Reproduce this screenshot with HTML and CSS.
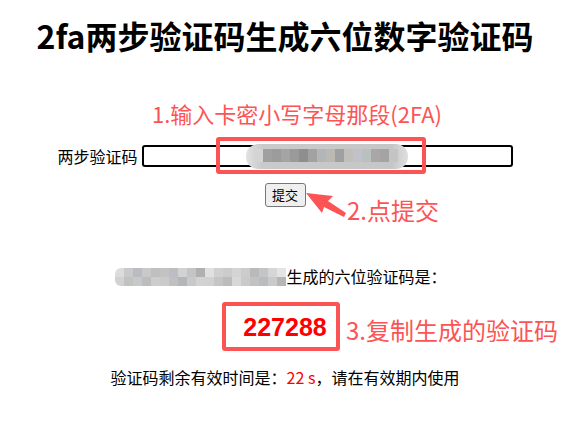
FILE: index.html
```html
<!DOCTYPE html>
<html lang="zh-CN">
<head>
<meta charset="utf-8">
<title>2fa两步验证码生成六位数字验证码</title>
<link rel="stylesheet" href="styles.css">
</head>
<body>
<div class="page">
  <h1 class="title">2fa两步验证码生成六位数字验证码</h1>

  <form class="form-row">
    <label class="label" for="secret">两步验证码</label>
    <span class="input-wrap">
      <input class="input" id="secret" type="text">
      <span class="mosaic mosaic-input">
        <i style="background:#d4d4d4"></i><i style="background:#a0a0a0"></i><i style="background:#9c9c9c"></i><i style="background:#a4a4a4"></i><i style="background:#9a9a9a"></i><i style="background:#8e8e8e"></i><i style="background:#a2a2a2"></i><i style="background:#b3b6b8"></i><i style="background:#bcb9b4"></i><i style="background:#9fa0a2"></i><i style="background:#c0bfb9"></i><i style="background:#c2c0c8"></i><i style="background:#b9c0c0"></i><i style="background:#a9a6a6"></i><i style="background:#a4a4a4"></i><i style="background:#c4c4c4"></i>
      </span>
    </span>
  </form>

  <div class="btn-row"><button class="btn" type="button">提交</button></div>

  <p class="result-line"><span class="mosaic-text"><i style="background:#dcdcdc"></i><i style="background:#cacaca"></i><i style="background:#b9bcc0"></i><i style="background:#c8c9cb"></i><i style="background:#c0bfbd"></i><i style="background:#c3c3c3"></i><i style="background:#bbbec2"></i><i style="background:#d2d2d2"></i><i style="background:#c4c4c4"></i><i style="background:#b0b0b0"></i><i style="background:#e0e0e0"></i><i style="background:#d0d0d0"></i><i style="background:#cbcccc"></i><i style="background:#d4d4d4"></i><i style="background:#cccccc"></i><i style="background:#bababa"></i><i style="background:#c3c6c8"></i><i style="background:#d6d6d6"></i><i style="background:#e4e4e4"></i><i style="background:#d2d2d2"></i><i style="background:#c2c2c2"></i><i style="background:#c6c8ca"></i><i style="background:#bdbdbd"></i><i style="background:#cdcdcd"></i><i style="background:#cbcbcb"></i><i style="background:#c0c0c0"></i><i style="background:#b4b7ba"></i><i style="background:#c9c9c9"></i><i style="background:#d3d3d3"></i><i style="background:#cfd1d2"></i><i style="background:#c5c5c5"></i><i style="background:#bcbcbc"></i><i style="background:#d8d8d8"></i><i style="background:#cacaca"></i><i style="background:#c2c2c2"></i><i style="background:#bcbcbc"></i><i style="background:#c8cacc"></i><i style="background:#b6b6b6"></i></span>生成的六位验证码是：</p>

  <div class="code">227288</div>

  <p class="expire">验证码剩余有效时间是：<span class="secs">22 s</span>，请在有效期内使用</p>

  <div class="annot">
    <div class="note note-1">1.输入卡密小写字母那段(2FA)</div>
    <div class="mark mark-1"></div>
    <svg class="arrow" width="60" height="40" viewBox="300 183 60 40">
      <polygon points="306,193 333,196 328,201 346,213 344,217 324,207 322,213" fill="#fc5454"/>
    </svg>
    <div class="note note-2">2.点提交</div>
    <div class="mark mark-3"></div>
    <div class="note note-3">3.复制生成的验证码</div>
  </div>
</div>
</body>
</html>
```

FILE: styles.css
```css
html, body {
  margin: 0;
  padding: 0;
  background: #fff;
}

.page {
  position: relative;
  width: 570px;
  height: 426px;
  overflow: hidden;
  font-family: "Noto Sans CJK SC", "Noto Sans", sans-serif;
  color: #000;
  font-size: 16px;
}

.title {
  margin: 13px 0 0;
  font-size: 32px;
  line-height: 44px;
  font-weight: 700;
  text-align: center;
}

.form-row {
  margin: 88px 0 0;
  display: flex;
  justify-content: center;
  align-items: center;
  gap: 4px;
  height: 22px;
}

.label {
  font-size: 16px;
  line-height: 22px;
}

.input-wrap {
  position: relative;
  display: block;
  width: 371px;
  height: 22px;
}

.input {
  display: block;
  box-sizing: border-box;
  width: 371px;
  height: 22px;
  margin: 0;
  padding: 0 4px;
  border: 2px solid #000;
  border-radius: 3px;
  background: #fff;
  outline: none;
}

.mosaic {
  display: flex;
  flex-wrap: wrap;
}

.mosaic i {
  display: block;
  width: 9px;
  height: 9px;
}

.mosaic-input {
  position: absolute;
  left: 104px;
  top: -1px;
  width: 162px;
  height: 25px;
  box-sizing: border-box;
  padding: 5px 8px 0 8px;
  border-radius: 12px;
  background: linear-gradient(90deg, #e2e2e2 0, #cacaca 10%, #c6c6c6 90%, #e0e0e0 100%);
  flex-wrap: nowrap;
  align-items: flex-start;
}

.mosaic-input i {
  height: 13px;
}

.mosaic-text {
  display: inline-block;
  overflow: hidden;
  vertical-align: -3px;
  width: 171px;
  height: 18px;
  line-height: 0;
  border-radius: 6px 0 0 6px;
}

.mosaic-text i {
  float: left;
  width: 9px;
  height: 9px;
}

.btn-row {
  margin-top: 16px;
  display: flex;
  justify-content: center;
}

.btn {
  box-sizing: border-box;
  width: 41px;
  height: 24px;
  margin: 0;
  padding: 0;
  font-family: "Noto Sans CJK SC", sans-serif;
  font-size: 13px;
  line-height: 20px;
  color: #000;
  background: #efefef;
  border: 1px solid #767676;
  border-radius: 3px;
}

.result-line {
  margin: 57px 0 0;
  font-size: 16px;
  line-height: 24px;
  height: 24px;
  text-align: center;
  padding-right: 8px;
}

.code {
  margin-top: 24px;
  font-family: "Liberation Sans", Arial, sans-serif;
  font-weight: 700;
  font-size: 25px;
  line-height: 30px;
  color: #ff0000;
  text-align: center;
}

.expire {
  margin: 23px 0 0;
  font-size: 16px;
  line-height: 24px;
  text-align: center;
}

.secs {
  color: #ff0000;
}

/* screenshot annotations laid over the page */
.annot {
  position: absolute;
  inset: 0;
  pointer-events: none;
}

.note {
  position: absolute;
  color: #fc5454;
  white-space: nowrap;
}

.note-1 {
  left: 152px;
  top: 100px;
  font-size: 22px;
  line-height: 26px;
}

.note-2 {
  left: 347px;
  top: 196px;
  font-size: 24px;
  line-height: 28px;
}

.note-3 {
  left: 346px;
  top: 316px;
  font-size: 24px;
  line-height: 28px;
}

.mark {
  position: absolute;
  box-sizing: border-box;
  border: 4px solid #fc5454;
  border-radius: 3px;
}

.mark-1 {
  left: 216px;
  top: 137px;
  width: 210px;
  height: 37px;
}

.mark-3 {
  left: 222px;
  top: 302px;
  width: 118px;
  height: 49px;
}

.arrow {
  position: absolute;
  left: 300px;
  top: 183px;
}
```
